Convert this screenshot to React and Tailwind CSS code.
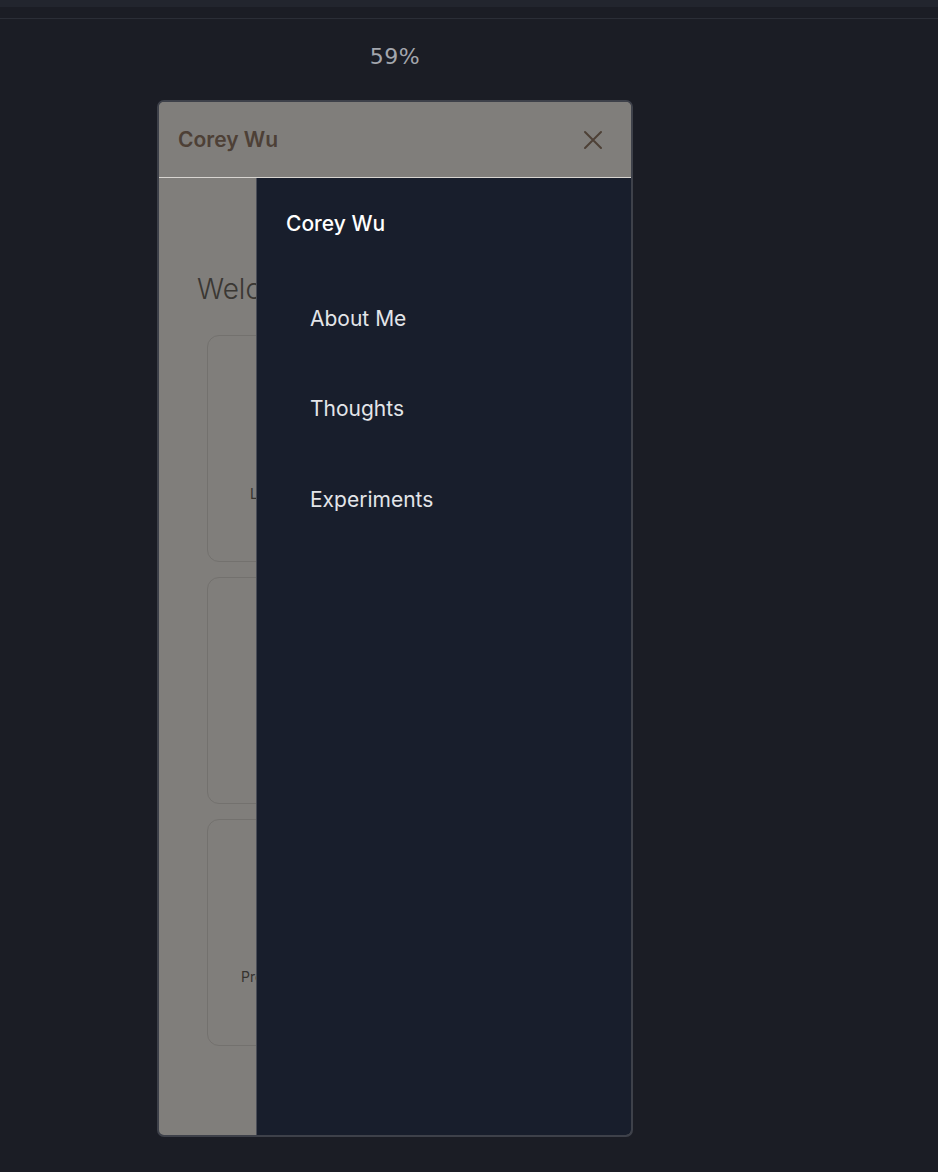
import React from "react";

export default function App() {
  const font = { fontFamily: "Inter, 'Noto Sans', 'Liberation Sans', sans-serif" };
  return (
    <div className="min-h-[1172px] bg-[#1b1d25] flex flex-col" style={font}>
      <div className="h-[7px] bg-[#22252e]" />
      <div className="h-[11px]" />
      <div className="h-px bg-[#2b2e37]" />
      <div className="pl-[157px] flex flex-col">
        <div className="w-[476px] flex flex-col items-center">
          <div className="mt-[24px] h-[28px] leading-[28px] text-[22px] text-[#a3a6ad] tracking-wide" style={{ fontFamily: "'DejaVu Sans', sans-serif" }}>
            59%
          </div>
          <div className="mt-[29px] w-[476px] h-[1037px] border-2 border-[#3e414a] rounded-[7px] overflow-hidden flex flex-col bg-[#807e7b]">
            <div className="h-[75px] shrink-0 flex items-center justify-between pl-[19px] pr-[28px] bg-[#807e7b]">
              <span className="text-[21px] font-semibold text-[#4d4036]">Corey Wu</span>
              <svg width="20" height="20" viewBox="0 0 20 20" fill="none" stroke="#4d4036" strokeWidth="2" strokeLinecap="round">
                <path d="M2 2 L18 18 M18 2 L2 18" />
              </svg>
            </div>
            <div className="h-px shrink-0 bg-[#d8d5d1]" />
            <div className="flex-1 flex overflow-hidden">
              <div className="w-[97px] shrink-0 overflow-hidden">
                <div className="w-[472px] flex flex-col pt-[93px]">
                  <div className="pl-[38px] h-[36px] leading-[36px] text-[28px] font-light text-[#3a3733] whitespace-nowrap">
                    Welcome to my corner
                  </div>
                  <div className="mt-[28px] pl-[48px] pr-[48px] flex flex-col gap-[15px]">
                    <div className="h-[227px] rounded-[12px] border border-[#73716e] pt-[147px] pl-[42px] text-[14px] text-[#36332f] whitespace-nowrap">
                      Learn more about who I am
                    </div>
                    <div className="h-[227px] rounded-[12px] border border-[#73716e]" />
                    <div className="h-[227px] rounded-[12px] border border-[#73716e] pt-[146px] pl-[33px] text-[14px] text-[#36332f] whitespace-nowrap">
                      Projects and experiments
                    </div>
                  </div>
                </div>
              </div>
              <div className="flex-1 bg-[#181e2c] border-l border-[#4a4d57] flex flex-col">
                <div className="pl-[29px] pt-[32px] h-[28px] leading-[28px] text-[21px] font-medium text-white box-content">
                  Corey Wu
                </div>
                <div className="mt-[35px] flex flex-col">
                  {["About Me", "Thoughts", "Experiments"].map((t) => (
                    <div key={t} className="h-[90.5px] flex items-center pl-[53px] text-[21px] text-[#e3e5e9]">
                      {t}
                    </div>
                  ))}
                </div>
              </div>
            </div>
          </div>
        </div>
      </div>
    </div>
  );
}
